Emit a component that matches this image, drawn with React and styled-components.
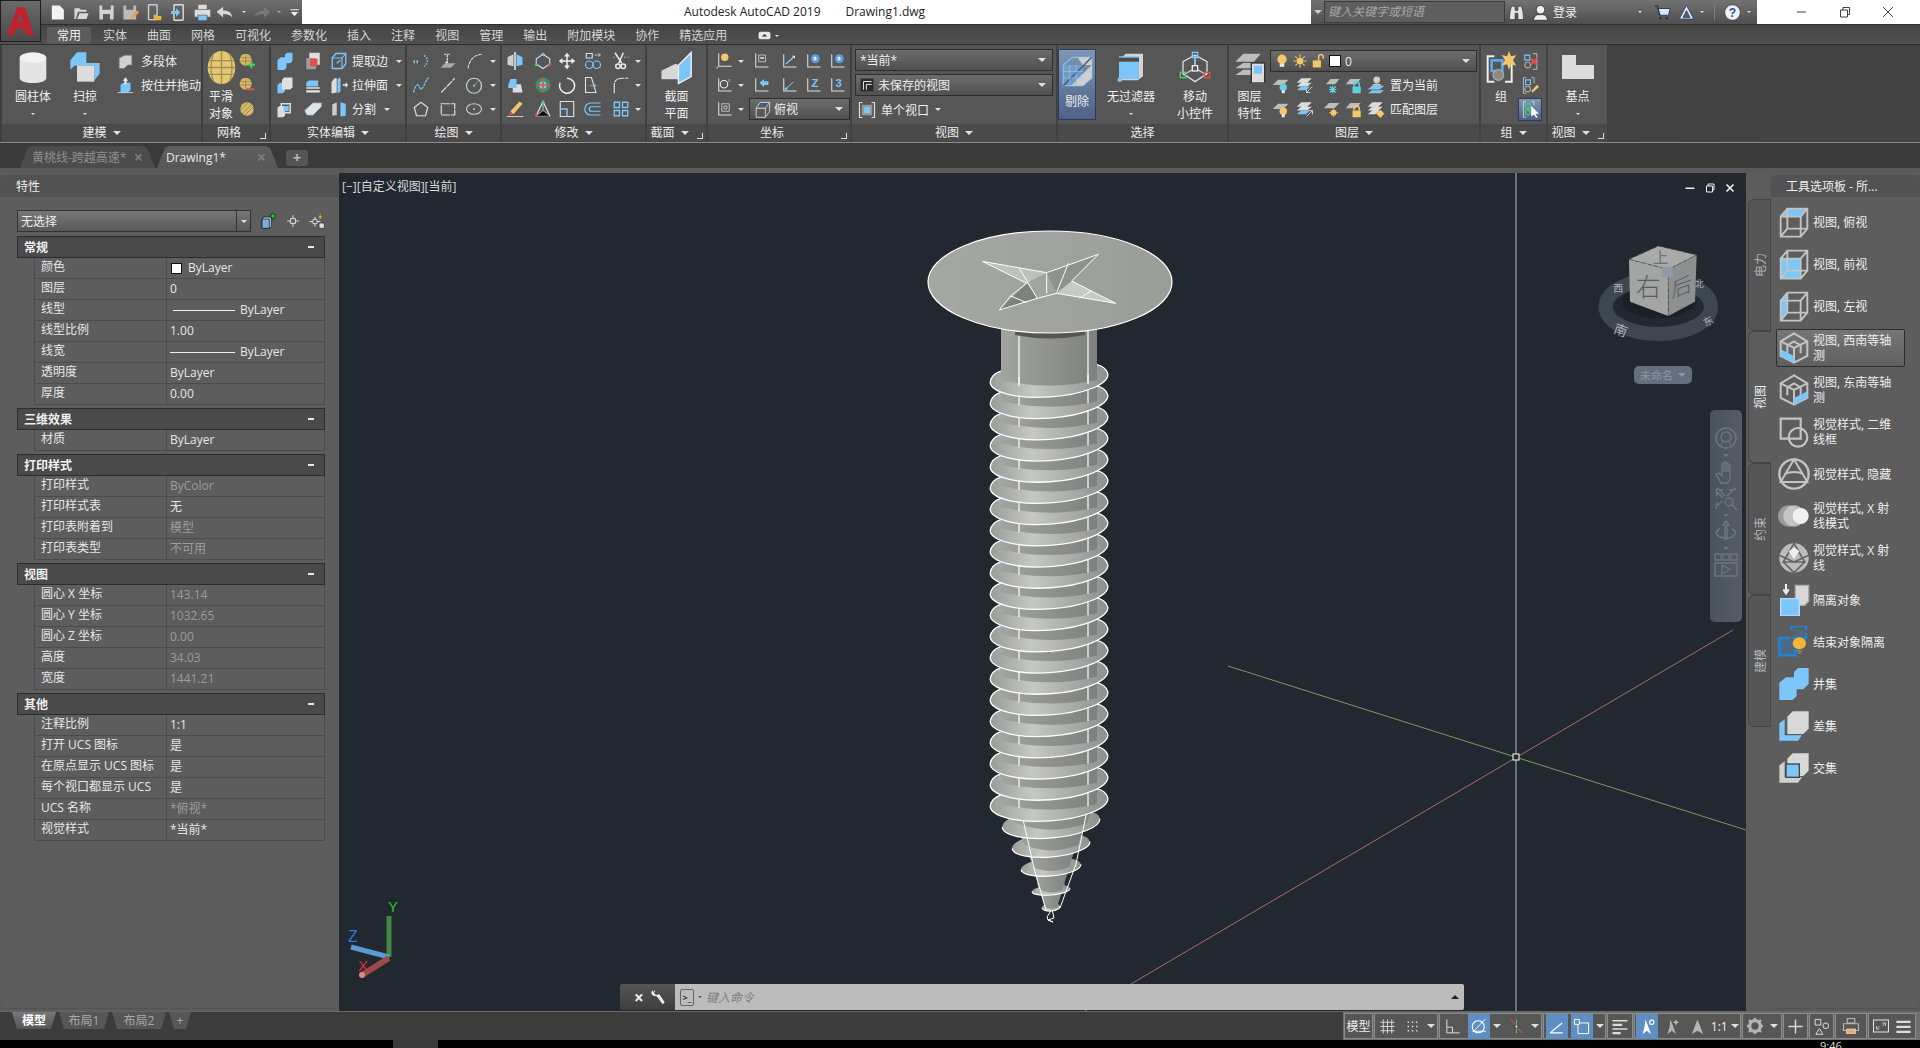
import { Fragment } from 'react';
import styled, { createGlobalStyle } from 'styled-components';

const FONT = '"Open Sans", "Noto Sans CJK SC", sans-serif';
const B = '#7cc6fa';
const W = '#e4e4e4';
const M = '#b4b4b4';
const Y = '#f2c86a';
const R = '#e2504a';

const GlobalStyle = createGlobalStyle`
  html, body { margin: 0; padding: 0; background: #000; }
  body { font-family: ${FONT}; font-size: 12px; color: #e8e8e8; }
`;

const Page = styled.div`
  position: relative;
  width: 1920px;
  height: 1048px;
  overflow: hidden;
  display: flex;
  flex-direction: column;
`;

/* title bar */
const TitleBar = styled.div`
  height: 24px;
  flex: none;
  background: #fff;
  display: flex;
  color: #222;
`;

const AppButton = styled.div`
  position: absolute;
  left: 0;
  top: 0;
  width: 39px;
  height: 40px;
  border: 1px solid #1d1d1d;
  background: linear-gradient(#6a6a6a, #4a4a4a);
  z-index: 3;
  display: flex;
  align-items: center;
  justify-content: center;
`;

const Quick = styled.div`
  margin-left: 41px;
  width: 261px;
  box-sizing: border-box;
  padding-left: 4px;
  background: linear-gradient(#6f6f6f, #4f4f4f);
  display: flex;
  align-items: center;
`;

const QuickSlot = styled.div`
  width: ${(p) => p.$w}px;
  margin-left: ${(p) => p.$ml || 0}px;
  flex: none;
  display: flex;
  justify-content: center;
  align-items: center;
`;

const DocTitle = styled.div`
  width: 1009px;
  padding-left: 382px;
  box-sizing: border-box;
  font-size: 12px;
  line-height: 24px;
  white-space: pre;
`;

const SearchBar = styled.div`
  width: 446px;
  background: linear-gradient(#727272, #4f4f4f);
  display: flex;
  align-items: center;
  color: #eee;
`;

const SearchInput = styled.div`
  width: 176px;
  height: 20px;
  flex: none;
  border: 1px solid #3c3c3c;
  background: #5e5e5e;
  color: #a8a8a8;
  font-style: italic;
  line-height: 20px;
  padding-left: 3px;
`;

const SearchLabel = styled.span`
  white-space: nowrap;
  flex: none;
`;

const SearchSep = styled.span`
  width: 1px;
  height: 16px;
  flex: none;
  margin-left: 9px;
  background: #7c7c7c;
`;

const WindowButtons = styled.div`
  flex: 1;
  display: flex;
  align-items: center;
  padding-left: 39px;
  gap: 31px;
`;

/* ribbon tabs */
const TabRow = styled.div`
  height: 20px;
  flex: none;
  background: linear-gradient(#444, #515151);
  border-top: 1px solid #2d2d2d;
  box-sizing: border-box;
  display: flex;
  align-items: flex-end;
  padding-left: 47px;
`;

const RibbonTab = styled.div`
  padding: 0 10px;
  height: 17px;
  line-height: 18px;
  margin-right: ${(p) => (p.$active ? 2 : 0)}px;
  color: ${(p) => (p.$active ? '#f2f2f2' : '#d4d4d4')};
  background: ${(p) => (p.$active ? '#5c5c5c' : 'none')};
  border-radius: 3px 3px 0 0;
  white-space: nowrap;
`;

const TabGlyph = styled.div`
  margin-left: 21px;
  height: 17px;
  display: flex;
  align-items: center;
  gap: 4px;
`;

const Ribbon = styled.div`
  height: 99px;
  flex: none;
  box-sizing: border-box;
  border-top: 1px solid #2e2e2e;
  border-bottom: 1px solid #8b8b8b;
  padding-left: 2px;
  display: flex;
  gap: 2px;
  background: linear-gradient(90deg, #3e3e3e, #434343);
`;

const Panel = styled.div`
  position: relative;
  width: ${(p) => p.$w}px;
  flex: none;
  height: 97px;
  display: flex;
  flex-direction: column;
  background: #565656;
`;

const PanelBody = styled.div`
  height: 79px;
  flex: none;
  display: flex;
`;

const PanelTitle = styled.div`
  height: 18px;
  flex: none;
  box-sizing: border-box;
  padding-right: ${(p) => (p.$launch ? 14 : 0)}px;
  background: #4a4a4a;
  display: flex;
  align-items: center;
  justify-content: center;
  gap: 6px;
  color: #eaeaea;
  line-height: 18px;
`;

const Launcher = styled.span`
  position: absolute;
  right: 3px;
  bottom: 3px;
  width: 6px;
  height: 6px;
  border-right: 1.5px solid #ddd;
  border-bottom: 1.5px solid #ddd;
  box-sizing: border-box;
`;

const Caret = styled.span`
  display: inline-block;
  flex: none;
  width: 0;
  height: 0;
  border-left: ${(p) => p.$s || 3}px solid transparent;
  border-right: ${(p) => p.$s || 3}px solid transparent;
  ${(p) => (p.$up ? 'border-bottom' : 'border-top')}: ${(p) => p.$s || 3}px solid ${(p) => p.$c || '#e0e0e0'};
  margin-left: ${(p) => p.$ml || 0}px;
`;

const BigTool = styled.div`
  width: ${(p) => p.$w}px;
  flex: none;
  display: flex;
  flex-direction: column;
  align-items: center;
  height: 79px;
  box-sizing: border-box;
  line-height: 17px;
  white-space: nowrap;
  color: #eee;
  ${(p) => p.$active && `
    border: 1px solid #2e3d55;
    height: 71px;
    margin-top: 4px;
    background: linear-gradient(#7f96b4, #4c6286);
  `}
`;

const BigIcon = styled.div`
  height: ${(p) => p.$h || 43}px;
  flex: none;
  display: flex;
  justify-content: center;
  padding-top: 6px;
  box-sizing: border-box;
`;

const CaretLine = styled.div`
  height: 17px;
  display: flex;
  align-items: center;
  justify-content: center;
  gap: 2px;
`;

const SmallGrid = styled.div`
  display: grid;
  grid-template-columns: ${(p) => p.$cols};
  grid-auto-rows: 24px;
  padding-top: ${(p) => (p.$pt === undefined ? 4 : p.$pt)}px;
  padding-left: ${(p) => p.$pl || 0}px;
  align-items: center;
`;

const SmallTool = styled.div`
  display: flex;
  align-items: center;
  justify-content: center;
  height: 24px;
`;

const SelectedTool = styled(SmallTool)`
  width: 24px;
  height: 23px;
  justify-self: center;
  box-sizing: border-box;
  background: linear-gradient(#7f96b4, #4c6286);
  border: 1px solid #2e3d55;
`;

const TextTool = styled.div`
  display: flex;
  align-items: center;
  height: 24px;
  white-space: nowrap;
  color: #eee;
  padding-left: ${(p) => p.$pl || 0}px;
`;

const Combo = styled.div`
  height: 22px;
  width: ${(p) => (p.$w ? `${p.$w}px` : 'auto')};
  box-sizing: border-box;
  border: 1px solid #2e2e2e;
  background: linear-gradient(#6c6c6c, #505050);
  display: flex;
  align-items: center;
  padding: 0 6px 0 4px;
  gap: 4px;
  color: #eee;
  white-space: nowrap;
`;

const GridCombo = styled(Combo)`
  grid-column: 3 / 7;
  margin-left: 3px;
  gap: 3px;
`;

const ComboText = styled.span`
  flex: 1;
`;

const ViewStack = styled.div`
  width: 100%;
  padding: 4px 3px 0;
  box-sizing: border-box;
  display: flex;
  flex-direction: column;
  gap: 3px;
`;

const ViewRow = styled.div`
  height: 21px;
  display: flex;
  align-items: center;
  padding-left: 3px;
  gap: 5px;
  color: #eee;
`;

const LayerCol = styled.div`
  display: flex;
  flex-direction: column;
  padding-top: 5px;
`;

const LayerSwatch = styled.span`
  width: 12px;
  height: 12px;
  background: #fff;
  border: 1px solid #111;
  box-sizing: border-box;
`;

/* document tabs */
const DocRow = styled.div`
  height: 25px;
  flex: none;
  box-sizing: border-box;
  padding: 3px 0 0 20px;
  background: #3a3a3a;
  display: flex;
`;

const DocTab = styled.div`
  width: ${(p) => p.$w}px;
  margin-left: ${(p) => p.$ml || 0}px;
  box-sizing: border-box;
  clip-path: polygon(0 100%, 8px 8%, 12px 0, calc(100% - 12px) 0, calc(100% - 8px) 8%, 100% 100%);
  background: ${(p) => (p.$active ? 'linear-gradient(#5e5e5e, #585858)' : '#4c4c4c')};
  color: ${(p) => (p.$active ? '#e8e8e8' : '#8f8f8f')};
  display: flex;
  align-items: center;
  padding: 0 12px 0 ${(p) => p.$pl}px;
  white-space: nowrap;
  font-size: 12px;
`;

const DocClose = styled.span`
  margin-left: auto;
  color: #7c7c7c;
  font-weight: 700;
  font-size: 16px;
  line-height: 16px;
`;

const PlusTab = styled.div`
  width: 22px;
  height: 16px;
  align-self: flex-end;
  margin: 0 0 2px 8px;
  background: #555;
  border-radius: 3px;
  color: #bbb;
  font-weight: 700;
  font-size: 14px;
  line-height: 16px;
  text-align: center;
`;

const Strip = styled.div`
  height: 5px;
  flex: none;
  background: #5a5a5a;
`;

/* main area */
const Main = styled.div`
  flex: none;
  height: 838px;
  display: flex;
  background: #5c5c5c;
`;

const LeftPalette = styled.div`
  width: 339px;
  flex: none;
  display: flex;
  flex-direction: column;
  padding-top: 2px;
  box-sizing: border-box;
`;

const PaletteHead = styled.div`
  height: 22px;
  flex: none;
  background: #525252;
  border-radius: 5px 5px 0 0;
  display: flex;
  align-items: center;
  padding-left: ${(p) => p.$pl}px;
  gap: 5px;
  color: #eee;
  white-space: nowrap;
`;

const Grip = styled.span`
  width: 4px;
  height: 12px;
  flex: none;
  background-image: radial-gradient(#8a8a8a 45%, transparent 50%);
  background-size: 2px 2px;
`;

const PaletteBody = styled.div`
  flex: 1;
  margin-bottom: 2px;
  border-radius: 5px;
  border-bottom: 1px solid #525252;
  padding: 13px 14px 0 17px;
  background: #5d5d5d;
`;

const SelectRow = styled.div`
  display: flex;
  align-items: center;
  height: 22px;
  margin-bottom: 4px;
`;

const SelectBox = styled.div`
  width: 236px;
  height: 22px;
  box-sizing: border-box;
  border: 1px solid #333;
  background: linear-gradient(#777, #585858);
  display: flex;
  align-items: center;
  padding-left: 3px;
  color: #eee;
`;

const SelectArrow = styled.span`
  margin-left: auto;
  width: 13px;
  height: 20px;
  border-left: 1px solid #333;
  display: flex;
  align-items: center;
  justify-content: center;
`;

const SelectIcon = styled.span`
  width: ${(p) => p.$w}px;
  display: flex;
  justify-content: center;
  margin-left: ${(p) => p.$ml || 0}px;
`;

const Category = styled.div`
  height: 22px;
  box-sizing: border-box;
  border: 1px solid #2d2d2d;
  background: #4a4a4a;
  display: flex;
  align-items: center;
  justify-content: space-between;
  padding: 0 10px 0 6px;
  font-weight: 700;
  color: #f0f0f0;
`;

const CategoryDash = styled.span`
  width: 6px;
  height: 2px;
  background: #e8e8e8;
`;

const Rows = styled.div`
  margin: 0 0 3px 17px;
  border-left: 1px solid #4c4c4c;
  border-right: 1px solid #4c4c4c;
`;

const Row = styled.div`
  height: 21px;
  box-sizing: border-box;
  border-bottom: 1px solid #4c4c4c;
  display: grid;
  grid-template-columns: 132px 1fr;
`;

const RowName = styled.div`
  padding-left: 6px;
  line-height: 17px;
  color: #e6e6e6;
  border-right: 1px solid #4c4c4c;
  white-space: nowrap;
  overflow: hidden;
`;

const RowValue = styled.div`
  padding-left: 3px;
  line-height: 20px;
  color: ${(p) => (p.$dim ? '#9c9c9c' : '#e6e6e6')};
  display: flex;
  align-items: center;
  white-space: nowrap;
`;

const LineSample = styled.span`
  width: ${(p) => p.$w}px;
  height: 1px;
  margin: 0 5px 0 ${(p) => p.$ml}px;
  background: #eee;
`;

const ColorSwatch = styled.span`
  width: 9px;
  height: 9px;
  background: #fff;
  border: 1px solid #111;
  margin: 0 6px 0 1px;
`;

/* viewport */
const Viewport = styled.div`
  position: relative;
  width: 1407px;
  flex: none;
  background: #212830;
  overflow: hidden;
`;

const Drawing = styled.svg`
  display: block;
`;

const ViewLabel = styled.div`
  position: absolute;
  left: 3px;
  top: 4px;
  color: #d8d8d8;
`;

const ViewControls = styled.div`
  position: absolute;
  right: 10px;
  top: 9px;
  display: flex;
  align-items: center;
  gap: 8px;
`;

const NamedPill = styled.div`
  position: absolute;
  left: 1295px;
  top: 193px;
  width: 58px;
  height: 18px;
  border-radius: 5px;
  background: #666e7e;
  color: #8d94a2;
  display: flex;
  align-items: center;
  justify-content: center;
  gap: 5px;
  font-size: 11px;
`;

const NavBar = styled.div`
  position: absolute;
  left: 1371px;
  top: 237px;
  width: 32px;
  height: 212px;
  border-radius: 5px;
  background: linear-gradient(90deg, #4a535b, #545d65);
  display: flex;
  flex-direction: column;
  align-items: center;
  padding-top: 17px;
  box-sizing: border-box;
  gap: 3px;
`;

const CommandLine = styled.div`
  position: absolute;
  left: 281px;
  bottom: 1px;
  width: 844px;
  height: 26px;
  display: flex;
  border-radius: 2px;
  overflow: hidden;
`;

const CommandTools = styled.div`
  width: 55px;
  flex: none;
  box-sizing: border-box;
  background: linear-gradient(#555, #3e3e3e);
  display: flex;
  align-items: center;
  padding-left: 4px;
  gap: 6px;
  color: #eee;
  font-weight: 700;
  font-size: 17px;
`;

const CommandInput = styled.div`
  flex: 1;
  background: #bcbcbc;
  display: flex;
  align-items: center;
  padding: 0 5px;
  gap: 4px;
  color: #7d7d7d;
  font-style: italic;
`;

const PromptBox = styled.span`
  width: 14px;
  height: 17px;
  border: 1px solid #666;
  box-sizing: border-box;
  border-radius: 2px;
  font-size: 9px;
  font-style: normal;
  line-height: 15px;
  text-align: center;
  color: #333;
  font-weight: 700;
`;

const Spacer = styled.span`
  flex: 1;
`;

/* tool palette */
const RightPalette = styled.div`
  flex: 1;
  display: flex;
  padding-left: 2px;
`;

const SideTabs = styled.div`
  width: 23px;
  flex: none;
  padding-top: 26px;
  display: flex;
  flex-direction: column;
`;

const SideTab = styled.div`
  height: 132px;
  box-sizing: border-box;
  border: 1px solid #444;
  border-right: ${(p) => (p.$active ? 'none' : '1px solid #444')};
  border-radius: 6px 0 0 6px;
  background: ${(p) => (p.$active ? '#5d5d5d' : '#555')};
  color: ${(p) => (p.$active ? '#eee' : '#b4b4b4')};
  display: flex;
  align-items: center;
  justify-content: center;
`;

const SideLabel = styled.span`
  transform: rotate(-90deg);
  white-space: nowrap;
`;

const ToolColumn = styled.div`
  flex: 1;
  display: flex;
  flex-direction: column;
  padding-top: 2px;
`;

const ToolBody = styled.div`
  flex: 1;
  margin-bottom: 2px;
  border-radius: 5px;
  border-bottom: 1px solid #525252;
  background: #5d5d5d;
  padding: 6px 0 0 5px;
`;

const ToolItem = styled.div`
  width: 129px;
  height: 38px;
  margin-bottom: 4px;
  box-sizing: border-box;
  padding-left: 1px;
  border: 1px solid ${(p) => (p.$hover ? '#2e2e2e' : 'transparent')};
  border-radius: 2px;
  background: ${(p) => (p.$hover ? 'linear-gradient(#767676, #5f5f5f)' : 'none')};
  display: flex;
  align-items: center;
  gap: 3px;
  color: #eee;
  line-height: 15px;
`;

const ToolText = styled.span`
  width: 83px;
  flex: none;
  word-break: break-all;
`;

/* status bar */
const StatusBar = styled.div`
  height: 29px;
  flex: none;
  box-sizing: border-box;
  background: #3c3c3c;
  border-top: 1px solid #666;
  display: flex;
  align-items: flex-start;
  justify-content: space-between;
`;

const LayoutTabs = styled.div`
  display: flex;
  padding-left: 12px;
  gap: 3px;
`;

const LayoutTab = styled.div`
  width: ${(p) => p.$w}px;
  height: 17px;
  line-height: 17px;
  text-align: center;
  clip-path: polygon(0 0, 100% 0, calc(100% - 5px) 100%, 5px 100%);
  background: ${(p) => (p.$active ? 'linear-gradient(#777, #555)' : '#565656')};
  color: ${(p) => (p.$active ? '#fff' : '#a8a8a8')};
  font-weight: ${(p) => (p.$active ? 700 : 400)};
`;

const StatusTools = styled.div`
  width: 577px;
  height: 28px;
  box-sizing: border-box;
  background: #6f6f6f;
  padding: 1px;
  display: flex;
  gap: 1px;
`;

const StatusGroup = styled.div`
  width: ${(p) => p.$w}px;
  flex: none;
  box-sizing: border-box;
  border: 1px solid #8c8c8c;
  background: #565656;
  display: flex;
  align-items: center;
  justify-content: space-around;
  color: #eee;
  white-space: nowrap;
`;

const StatusIcon = styled.span`
  width: ${(p) => p.$w || 22}px;
  height: 25px;
  display: flex;
  align-items: center;
  justify-content: center;
  background: ${(p) => (p.$on ? '#5f8fc2' : 'none')};
`;

const BottomEdge = styled.div`
  height: 8px;
  flex: none;
  background: #000;
  display: flex;
  overflow: hidden;
  color: #ddd;
`;

const EdgeGap = styled.div`
  width: 45px;
  margin-left: 393px;
  background: #3a3a3a;
`;

const Clock = styled.div`
  margin-left: 1382px;
  line-height: 20px;
  margin-top: -4px;
  font-size: 11px;
`;

const Svg = styled.svg`
  display: block;
  flex: none;
`;

const Ico = ({ n, s = 18 }) => (
  <Svg width={s} height={s} viewBox="0 0 24 24">{ICONS[n]}</Svg>
);

const wire = (extra) => (
  <>
    {extra}
    <path d="M2 8h15v15H2zM2 8l5-6h15v15l-5 6M17 8l5-6M7 2v15h15M7 17l-5 6" fill="none" stroke="#c4c4c4" strokeWidth="1.4" />
  </>
);

const iso = (face) => (
  <>
    <g fill="none" stroke="#c4c4c4" strokeWidth="1.5">
      <path d="M12 1l10 6v11l-10 5-10-5V7zM2 7l10 5 10-5M12 12v11M7 10l5-3 5 3M7 10v6M17 10v6" />
    </g>
    <path d={face} fill={B} />
  </>
);

const ICONS = {
  logo: <path d="M9 1h6l7 22h-6l-1.5-5H8l-1.5 5H1zM9.500 13h4L11.500 6z" fill="#c3202c" />,
  newDoc: <path d="M4 2h11l6 6v14H4z" fill="#f2f2f2" />,
  open: <path d="M2 21V6h7l2 2h8v3H7L4 21zm4 0l3-8h13l-3 8z" fill="#d8d8d8" />,
  save: <path d="M2 2h20v20H2zM6 2v6h12V2M7 14h10v8H7z" fill="#d2d2d2" fillRule="evenodd" />,
  saveAs: <><path d="M2 2h18v20H2zM6 2v6h10V2" fill="#bbb" fillRule="evenodd" /><path d="M12 21l2-5 7-7 3 3-7 7z" fill="#e8a14a" /></>,
  phoneIn: <><rect x="5" y="1" width="12" height="21" rx="1" fill="none" stroke="#ccc" strokeWidth="2" /><path d="M12 15h4l1 2h6v6H12z" fill="#e8b24a" /></>,
  phoneUp: <><rect x="7" y="1" width="13" height="22" rx="1" fill="none" stroke="#ddd" strokeWidth="2" /><path d="M3 10h7V6l6 6-6 6v-4H3z" fill={B} /></>,
  print: <><path d="M6 1h12v6H6zM1 8h22v10h-4v-3H5v3H1z" fill="#ddd" /><path d="M6 16h12v7H6z" fill={B} /></>,
  undo: <path d="M10 4v5c7 0 12 2 13 10-3-4-7-5-13-5v5L1 11z" fill="#d8d8d8" />,
  redo: <path d="M14 4v5C7 9 2 11 1 19c3-4 7-5 13-5v5l9-8z" fill="#777" />,
  menu: <path d="M3 5h18v2H3zM4 11h16l-8 9z" fill="#eee" />,
  binoc: <path d="M3 10l2-7h5v6h4V3h5l2 7 1 12h-8v-9h-4v9H2z" fill="#e6e6e6" stroke="#333" />,
  user: <><circle cx="12" cy="8" r="6" fill="#eee" stroke="#222" /><path d="M2 23c1-6 4-8 7-8h6c3 0 6 2 7 8z" fill="#eee" stroke="#222" /></>,
  cart: <><path d="M1 3h4l3 12h12l2-8H7" fill="none" stroke="#16335f" strokeWidth="2" /><path d="M7 7h15l-2 8H9z" fill="#dfe7f2" /><circle cx="9" cy="20" r="2" fill="#16335f" /><circle cx="18" cy="20" r="2" fill="#16335f" /></>,
  a360: <path d="M12 2l10 19H2zM12 9l-5 10h10z" fill="#eaeef6" stroke="#1e3b72" fillRule="evenodd" />,
  help: <><circle cx="12" cy="12" r="11" fill="#eef2f8" stroke="#333" /><text x="12" y="18" fontSize="17" fontWeight="700" textAnchor="middle" fill="#1d4fa0" fontFamily="Liberation Sans">?</text></>,
  cyl: <><path d="M2 5v15c0 2.500 4.500 4 10 4s10-1.500 10-4V5z" fill={W} /><ellipse cx="12" cy="5" rx="10" ry="4" fill="#f2f2f2" /></>,
  sweep: <><path d="M1 7l5-6h7v8h10v8l-4 5V11H4l-3 3z" fill={B} /><path d="M6 11h13v12H6z" fill="#dcdcdc" /></>,
  polysolid: <path d="M3 7l8-4h10v14h-6l-5 5H3z" fill="#d0d0d0" stroke="#777" />,
  presspull: <><path d="M5 11l4-3h10v11l-4 3H5z" fill={B} /><path d="M12 1l3 4h-2v5h-2V5H9zM1 22h22" stroke="#eee" fill="#eee" /></>,
  sphere: <><ellipse cx="12" cy="12" rx="10" ry="12" fill="#e3c878" /><path d="M3 7h18M2 12h20M3 17h18M12 0v24M6 2c-2 6-2 14 0 20M18 2c2 6 2 14 0 20" stroke="#a58d4a" strokeWidth="1" fill="none" /></>,
  meshAdd: <><circle cx="10" cy="10" r="9" fill="#d8bb6a" /><path d="M2 7h16M1 12h18M10 1v18" stroke="#8b7338" fill="none" /><path d="M13 16h4v-4h3v4h4v3h-4v4h-3v-4h-4z" fill="#4ece6a" /></>,
  meshSub: <><circle cx="10" cy="10" r="9" fill="#d8bb6a" /><path d="M2 7h16M1 12h18M10 1v18" stroke="#8b7338" fill="none" /><path d="M11 17h12v3H11z" fill={R} /></>,
  meshCrease: <><circle cx="12" cy="12" r="10" fill="#d8bb6a" /><path d="M4 20L20 4M8 22L22 8M2 14L14 2" stroke="#8b7338" fill="none" /></>,
  union: <path d="M2 11l4-4h6V3l3-2h7v11l-3 3h-5v6l-3 3H2z" fill={B} />,
  subtract: <><path d="M7 1h14v16H7z" fill="#ddd" /><path d="M3 8h13v15H3z" fill="#9d9d9d" /><path d="M8 9h10v10H8z" fill={R} /></>,
  extract: <><path d="M3 8l5-6h13v14l-5 6H3z" fill="none" stroke={B} strokeWidth="1.8" /><path d="M3 8h13v14M16 8l5-6M9 15l5-4" fill="none" stroke={B} strokeWidth="1.5" /></>,
  faceBoth: <><path d="M2 12l3-3h7v11l-3 3H2z" fill={B} /><path d="M8 5l3-3h11v13l-3 3H8z" fill="#e0e0e0" /></>,
  stack: <><path d="M3 9l3-3h13v8H3z" fill={B} /><path d="M3 15h18v2H3zM3 19h18v3H3z" fill="#e4e4e4" /></>,
  extrude: <><path d="M2 8l4-5h3v19l-4 1H2z" fill="#ddd" /><path d="M10 4l4-2v19l-4 2z" fill={B} /><path d="M17 11h4V8l3 4-3 4v-3h-4z" fill="#eee" /></>,
  boxLines: <><path d="M2 10l3-2h7v13l-3 2H2z" fill="#ddd" /><path d="M7 5h12v12H7z" fill="none" stroke="#ddd" strokeWidth="2" /><path d="M10 8h7v7h-7z" fill={B} /></>,
  eraser: <path d="M1 14L12 4h11v5L12 20H4z" fill="#e4e4e4" stroke={B} />,
  split: <><path d="M3 6l6-3v17l-6 1z" fill="#ccc" /><path d="M14 3l7 2v16l-7 1z" fill={B} /></>,
  dash: <path d="M2 12h8M16 5c6 2 6 11 0 14M2 14h2M6 14h2" fill="none" stroke={B} strokeWidth="2" strokeDasharray="2 2" />,
  plane: <><path d="M2 21l6-6h14l-6 6z" fill="#aaa" /><path d="M11 15V3M7 3h8M9 15l2-4" stroke="#eee" strokeWidth="1.5" strokeDasharray="3 1" /></>,
  arcDots: <path d="M4 22C6 10 12 4 22 3" fill="none" stroke="#ddd" strokeWidth="1.4" strokeDasharray="5 1" />,
  spline: <path d="M2 22c2-9 5-12 7-9s2 7 5 3 4-9 8-14" fill="none" stroke={B} strokeWidth="1.6" strokeDasharray="4 1" />,
  line: <path d="M3 22L21 3" stroke="#ddd" strokeWidth="1.6" strokeDasharray="10 1" />,
  circle: <><circle cx="12" cy="13" r="10" fill="none" stroke="#ccc" strokeWidth="1.6" /><circle cx="12" cy="13" r="1.5" fill={B} /><path d="M12 13l6-7" stroke={B} /></>,
  polygon: <path d="M12 3l9 7-3 11H6L3 10z" fill="none" stroke="#ddd" strokeWidth="1.6" />,
  rect: <path d="M3 5h18v15H3z" fill="none" stroke="#ddd" strokeWidth="1.6" strokeDasharray="12 1" />,
  ellipse: <><ellipse cx="12" cy="12" rx="10" ry="7" fill="none" stroke="#ccc" strokeWidth="1.6" /><circle cx="12" cy="12" r="1.5" fill={B} /></>,
  mirror: <><path d="M12 0v24" stroke="#eee" strokeWidth="2" /><path d="M2 7l8-4v16l-8-2z" fill="#cfcfcf" /><path d="M14 3l8 4v10l-8 2z" fill={B} /></>,
  move3d: <><path d="M12 3L3 9v7l9 6 9-6V9z" fill="none" stroke="#ddd" strokeWidth="1.4" /><circle cx="12" cy="3" r="2" fill={B} /><circle cx="3" cy="17" r="2" fill="#4fcf70" /><circle cx="21" cy="17" r="2" fill={R} /></>,
  move: <path d="M12 1l4 5h-3v5h5V8l5 4-5 4v-3h-5v5h3l-4 5-4-5h3v-5H6v3l-5-4 5-4v3h5V6H8z" fill="#eee" />,
  copy: <><path d="M3 2h8v6H3z" fill="none" stroke="#ddd" strokeWidth="1.5" /><path d="M14 4h7M19 2l3 2-3 2" stroke="#ddd" fill="none" /><circle cx="7" cy="17" r="5" fill="none" stroke={B} strokeWidth="1.6" /><circle cx="17" cy="17" r="5" fill="none" stroke={B} strokeWidth="1.6" /></>,
  scissors: <><path d="M4 1l9 14M15 1l-6 14" stroke="#eee" strokeWidth="2" /><circle cx="8" cy="19" r="3" fill="none" stroke="#eee" strokeWidth="2" /><circle cx="15" cy="19" r="3" fill="none" stroke="#eee" strokeWidth="2" /><path d="M1 7h22" stroke={B} strokeDasharray="3 2" /></>,
  stretch: <><path d="M9 14l3-3h8l2 11H9z" fill="#ddd" /><path d="M3 12l3-8h8v12H3z" fill={B} /></>,
  orbitBall: <><circle cx="12" cy="12" r="10" fill="#3f8f5a" /><circle cx="12" cy="12" r="5" fill={B} /><path d="M2 12h20M12 2v20" stroke={R} strokeWidth="2" /></>,
  rotate: <path d="M12 3a10 10 0 1 1-9 6" fill="none" stroke="#eee" strokeWidth="2" />,
  scale: <><path d="M2 2h8l6 20H2z" fill="none" stroke="#ddd" strokeWidth="1.5" /><path d="M7 13h9M13 10l3 3-3 3" stroke={B} fill="none" /></>,
  fillet: <path d="M3 23V12C3 6 7 3 14 3h8" fill="none" stroke="#ddd" strokeWidth="1.6" strokeDasharray="14 1" />,
  pencil: <><path d="M6 15L18 2l4 3L10 19z" fill="#f2c86a" /><path d="M6 15l4 4-6 2z" fill={R} /><path d="M1 22h22" stroke="#eee" /></>,
  triMesh: <><path d="M12 2L3 21h18z" fill="none" stroke="#ddd" strokeWidth="1.6" /><path d="M12 2v12M3 21l9-7 9 7" stroke="#ddd" /><circle cx="12" cy="3" r="2" fill="#4fcf70" /><circle cx="3" cy="20" r="2" fill={R} /></>,
  scaleBox: <><path d="M3 2h18v20H3z" fill="none" stroke="#ddd" strokeWidth="1.5" /><path d="M3 12h9v10" fill="none" stroke={B} strokeWidth="2" /></>,
  offset: <path d="M22 4H9a8 8 0 0 0 0 16h13M22 9H10a3 3 0 0 0 0 6h12" fill="none" stroke={B} strokeWidth="1.6" />,
  array: <path d="M3 3h7v7H3zM14 3h7v7h-7zM3 14h7v7H3zM14 14h7v7h-7z" fill="none" stroke={B} strokeWidth="1.8" />,
  section: <><path d="M1 14l10-5 4 2v9H1z" fill="#d8d8d8" /><path d="M13 10l9-9v17l-9 5z" fill={B} stroke="#eee" /></>,
  ucsBulb: <><path d="M5 2v17h17M2 22l3-3" stroke="#ddd" fill="none" strokeWidth="1.4" /><circle cx="13" cy="7" r="5" fill={Y} /></>,
  ucsObj: <><path d="M5 2v18h17" stroke="#ddd" fill="none" strokeWidth="1.4" /><path d="M9 4h9v9H9z" fill="#555" stroke="#ddd" /><path d="M11 7h5v2h-5z" fill="#eee" /></>,
  ucsFace: <><path d="M5 3v17h17" stroke="#ddd" fill="none" strokeWidth="1.4" /><path d="M8 16L19 6" stroke={B} strokeWidth="2" /><path d="M16 5h4v4z" fill="#eee" /></>,
  ucsGlobe: <><path d="M5 3v17h17" stroke="#ddd" fill="none" strokeWidth="1.4" /><circle cx="15" cy="9" r="6" fill="#5a9ee0" /><path d="M12 7l4-1 1 4-3 2z" fill="#e8e8e8" /></>,
  ucsX: <><path d="M5 3v17h17" stroke="#ddd" fill="none" strokeWidth="1.4" /><circle cx="12" cy="11" r="5" fill="none" stroke="#eee" strokeWidth="1.5" /><text x="17" y="8" fontSize="8" fill={B} fontFamily="Liberation Sans">x</text></>,
  ucsUndo: <><path d="M5 3v17h17" stroke="#ddd" fill="none" strokeWidth="1.4" /><path d="M10 9l6-5v3h6v5h-6v3z" fill={B} /></>,
  ucsDot: <><path d="M5 3v17h17" stroke="#ddd" fill="none" strokeWidth="1.4" /><path d="M8 17l10-9" stroke="#ddd" /><circle cx="8" cy="17" r="2" fill={B} /></>,
  ucsZ: <><path d="M5 3v17h17" stroke="#ddd" fill="none" strokeWidth="1.4" /><text x="10" y="15" fontSize="15" fontWeight="700" fill={B} fontFamily="Liberation Sans">Z</text></>,
  ucs3: <><path d="M5 3v17h17" stroke="#ddd" fill="none" strokeWidth="1.4" /><text x="10" y="15" fontSize="15" fontWeight="700" fill={B} fontFamily="Liberation Sans">3</text></>,
  ucsBox: <><path d="M5 3v17h17" stroke="#ddd" fill="none" strokeWidth="1.4" /><path d="M9 5h10v10H9zM12 8h4v4h-4z" fill="none" stroke="#ddd" /></>,
  topView: <><path d="M3 10h13v13H3zM3 10l6-8h13v13l-6 8" fill="none" stroke="#ddd" strokeWidth="1.2" /><path d="M3 10l6-8h13l-6 8z" fill="#4c5e75" stroke="#ddd" /></>,
  corner: <><rect x="1" y="1" width="22" height="22" fill="#2c2c2c" /><path d="M6 20V6h14M11 20V11h9" fill="none" stroke="#eee" strokeWidth="1.6" /></>,
  viewport: <><path d="M6 2H2v20h4M18 2h4v20h-4" fill="none" stroke="#ddd" strokeWidth="1.6" /><path d="M5 5h14v14H5z" fill="#999" /><path d="M8 8h8v8H8z" fill={B} /></>,
  hide: <><path d="M1 7l7-6h15v16l-7 6H1z" fill="none" stroke={B} strokeWidth="1" /><path d="M1 7h15v16H1z" fill="#7fb3e6" fillOpacity=".45" /><path d="M7 23L23 7v10l-7 6z M12 1h11v6l-7 0z" fill="#cfcfcf" /><path d="M1 23L23 1" stroke="#3c5a7e" /><path d="M6 7v16M11 7v16M1 12h15M1 17h15" stroke={B} strokeWidth=".6" /></>,
  filter: <><path d="M4 6l4-4h13v17l-4 3H4z" fill="#d4d4d4" /><path d="M3 4h15v17H3z" fill={B} /><path d="M3 5h15v3H3z" fill="#4c4c4c" /><path d="M2 20h3v3H2z" fill={B} /></>,
  gizmo: <><path d="M12 3L3 8v9l9 6 9-6V8z" fill="none" stroke="#ddd" strokeWidth="1" /><path d="M12 3v10M12 13l-9 5M12 13l9 5" stroke="#ccc" /><path d="M12 13v-9" stroke={B} /><rect x="10" y="1" width="4" height="4" fill="none" stroke={B} /><rect x="1" y="16" width="4" height="4" fill="none" stroke="#4fcf70" /><rect x="19" y="16" width="4" height="4" fill="none" stroke={R} /><rect x="10" y="11" width="4" height="4" fill="#555" stroke="#eee" /></>,
  layerProp: <><path d="M1 8l6-6h13l-5 6zM1 13l6-4h13l-5 4zM1 18l6-4h13l-5 4z" fill="#bdbdbd" /><rect x="13" y="9" width="10" height="15" fill="#ddd" stroke="#333" /><rect x="15" y="11" width="6" height="6" fill={B} /></>,
  bulb: <><circle cx="12" cy="9" r="8" fill={Y} /><path d="M8 16h8v6H8z" fill="#e8e8e8" /></>,
  sun: <><circle cx="12" cy="12" r="6" fill={Y} /><path d="M12 1v4M12 19v4M1 12h4M19 12h4M4 4l3 3M17 17l3 3M20 4l-3 3M7 17l-3 3" stroke={Y} strokeWidth="2" /></>,
  lock: <><path d="M3 11h14v12H3z" fill={Y} /><path d="M13 11V5a4 4 0 0 1 8 0v3" fill="none" stroke={Y} strokeWidth="2.500" /></>,
  layerBulb: <><path d="M1 12L8 5h14l-7 7z" fill="#bdbdbd" /><circle cx="15" cy="15" r="5" fill="#5fd0e6" /><path d="M13 19h4v4h-4z" fill="#eee" /></>,
  layerIso: <><path d="M1 9l6-6h14l-6 6zM1 14l6-5h14l-6 5z" fill="#dcdcdc" /><path d="M1 19l6-5h12l-6 5z" fill={B} /><path d="M22 14l-8 8M14 17v5h5" stroke="#eee" fill="none" /></>,
  layerFrz: <><path d="M4 11l6-7h12l-6 7z" fill="#bdbdbd" /><path d="M13 13v10M8 18h10M9 14l8 8M17 14l-8 8" stroke="#5fd0e6" strokeWidth="1.6" /></>,
  layerLock: <><path d="M1 11l6-7h14l-6 7z" fill="#bdbdbd" /><path d="M10 14h11v9H10z" fill="#5fd0e6" /><path d="M12 14v-3a3.500 3.500 0 0 1 7 0v3" fill="none" stroke="#5fd0e6" strokeWidth="2" /></>,
  layerCur: <><circle cx="13" cy="5" r="4.500" fill="#cfcfcf" /><path d="M7 13c0-2 3-3 6-3s6 1 6 3z" fill="#cfcfcf" /><path d="M1 18l6-5h16l-6 5zM1 23l6-4h16l-6 4z" fill={B} /></>,
  layerBulbY: <><path d="M1 12L8 5h14l-7 7z" fill="#bdbdbd" /><circle cx="15" cy="15" r="5" fill={Y} /><path d="M13 19h4v4h-4z" fill="#eee" /></>,
  layerIsoUp: <><path d="M1 9l6-6h14l-6 6zM1 14l6-5h14l-6 5z" fill="#dcdcdc" /><path d="M1 19l6-5h12l-6 5z" fill={B} /><path d="M14 22l8-8M22 19v-5h-5" stroke="#eee" fill="none" /></>,
  layerSun: <><path d="M1 11L8 4h14l-7 7z" fill="#bdbdbd" /><circle cx="14" cy="17" r="4" fill={Y} /><path d="M14 11v12M8 17h12" stroke={Y} /></>,
  layerLockY: <><path d="M1 11l6-7h14l-6 7z" fill="#bdbdbd" /><path d="M10 14h11v9H10z" fill={Y} /><path d="M12 14v-3a3.500 3.500 0 0 1 7 0v3" fill="none" stroke={Y} strokeWidth="2" /></>,
  layerMatch: <><path d="M1 9l6-6h14l-6 6zM1 14l6-5h14l-6 5zM1 19l6-5h10l-6 5z" fill="#dcdcdc" /><path d="M12 18l6-5 5 5-5 6z" fill={Y} /></>,
  group: <><path d="M7 4H2v19h5M15 23h5V4" fill="none" stroke="#eee" strokeWidth="1.5" /><path d="M5 7h8v8H5z" fill="none" stroke="#5aa7e8" strokeWidth="2" /><circle cx="10" cy="18" r="4" fill="#8a8a8a" stroke="#aaa" /><path d="M18 0l1.500 4 4-1-2.500 4 2.500 4-4-1-1.500 4-1.500-4-4 1 2.500-4-2.500-4 4 1z" fill={Y} /></>,
  groupDel: <><path d="M15 1h6v22h-6" fill="none" stroke="#ddd" /><path d="M4 3h7v7H4z" fill="none" stroke={B} strokeWidth="1.6" /><circle cx="8" cy="17" r="4" fill="none" stroke="#aaa" strokeWidth="1.6" /><path d="M13 8l8 8M21 8l-8 8" stroke={R} strokeWidth="3" /></>,
  groupEdit: <><path d="M6 1H2v22h4M13 1h4v8" fill="none" stroke="#ddd" /><path d="M5 4h7v7H5z" fill="none" stroke={B} strokeWidth="1.6" /><circle cx="8" cy="17" r="4" fill="none" stroke="#aaa" strokeWidth="1.6" /><path d="M13 20L21 11l3 3-9 8z" fill={Y} /></>,
  groupSel: <><path d="M6 1H2v22h4M13 1h4v5" fill="none" stroke="#eee" /><path d="M5 4h7v6H5z" fill="none" stroke="#4fcf70" strokeWidth="1.6" /><circle cx="8" cy="16" r="3.500" fill="none" stroke="#4fcf70" strokeWidth="1.6" /><path d="M13 7v15l4-3 3 5 2-1-3-5h5z" fill="#fff" /></>,
  base: <path d="M0 3h10.500v7.500H24V21H0z" fill="#dcdcdc" />,
  plusCube: <><path d="M3 9l3-3h11v14l-3 3H3z" fill="#a7c8ea" stroke="#111" /><path d="M3 9h11v14H3z" fill="#7fa9d6" stroke="#111" /><path d="M15 3h3V0h3v3h3v3h-3v3h-3V6h-3z" fill="#30cc30" stroke="#111" /></>,
  pick: <><path d="M12 2v20M2 12h20" stroke="#eee" strokeWidth="1.5" /><rect x="8" y="8" width="8" height="8" fill="#5d5d5d" stroke="#eee" strokeWidth="1.5" /></>,
  quickSel: <><path d="M9 6v14M1 13h16" stroke="#eee" strokeWidth="1.5" /><rect x="6" y="10" width="6" height="6" fill="#5d5d5d" stroke="#eee" /><path d="M18 0l-4 7h3l-2 5 5-7h-3z" fill="#f2a03c" /><path d="M15 15h8v8h-8z" fill="#ddd" stroke="#222" /></>,
  mini: <path d="M3 11h18v3H3z" fill="#eee" />,
  pill: <><rect x="1" y="5" width="22" height="14" rx="4" fill="#e8e8e8" /><path d="M7 14h10l-5-5z" fill="#333" /></>,
  restore: <path d="M8 4h12v12h-3v4H5V8h3zM8 8h9v8" fill="none" stroke="#eee" strokeWidth="2" />,
  closeX: <path d="M5 5l14 14M19 5L5 19" stroke="#eee" strokeWidth="3.500" />,
  winMin: <path d="M2 12h18" stroke="#111" strokeWidth="1.6" />,
  winMax: <path d="M3 8h14v14H3zM8 8V3h13v14h-4" fill="none" stroke="#111" strokeWidth="1.6" />,
  winClose: <path d="M2 2l20 20M22 2L2 22" stroke="#111" strokeWidth="1.6" />,
  wheel: <><circle cx="12" cy="11" r="10" fill="none" stroke="#6d767e" strokeWidth="1.5" /><circle cx="12" cy="10" r="5" fill="none" stroke="#6d767e" strokeWidth="1.5" /><path d="M6 20l3-5M18 20l-3-5" stroke="#6d767e" /></>,
  hand: <path d="M7 23l-5-9 3-1 3 3V4h2v8V2h2v10V3h2v9V5h2v10c0 5-1 8-3 8z" fill="none" stroke="#6d767e" strokeWidth="1.4" />,
  zoom: <path d="M2 2l6 1-2 1 5 5M2 2l1 6 1-2 5 5M22 2l-6 1 2 1-5 5M2 22l1-6 1 2 4-4M18 18l5 5M19 15a4 4 0 1 1-8 0 4 4 0 0 1 8 0z" fill="none" stroke="#6d767e" strokeWidth="1.4" />,
  orbit: <path d="M12 1l3 4h-2v14h-2V5H9zM6 9c-5 2-5 6 0 8s8 2 12 0 5-6 0-8" fill="none" stroke="#6d767e" strokeWidth="1.4" />,
  recorder: <path d="M1 1h6v6H1zM9 1h6v6H9zM17 1h6v6h-6zM1 10h22v13H1zM8 12l8 4.500L8 21z" fill="none" stroke="#6d767e" strokeWidth="1.3" />,
  wrench: <path d="M7 1l-1 5 3 3 5-1 8 12-3 3-9-12-5-1-3-3 1-5 3 3 2-1z" fill="#eee" />,
  grid: <path d="M6 2v20M12 2v20M18 2v20M2 6h20M2 12h20M2 18h20" stroke="#ddd" strokeWidth="1.3" />,
  dots: <path d="M5 5h2v2H5zM11 5h2v2h-2zM17 5h2v2h-2zM5 11h2v2H5zM11 11h2v2h-2zM17 11h2v2h-2zM5 17h2v2H5zM11 17h2v2h-2zM17 17h2v2h-2z" fill="#ddd" />,
  ortho: <path d="M4 2v19h18M4 13h8v8" fill="none" stroke="#ddd" strokeWidth="1.4" />,
  polar: <><circle cx="11" cy="13" r="8" fill="none" stroke="#fff" strokeWidth="1.5" /><path d="M5 19L20 3M3 19h18" stroke="#fff" strokeWidth="1.3" /></>,
  isoDraft: <><path d="M4 2l16 20" stroke={R} strokeWidth="1.4" /><path d="M12 2v20" stroke="#4fcf70" strokeWidth="1.4" /><rect x="10" y="10" width="4" height="4" fill="#eee" stroke="#333" /></>,
  osnap: <path d="M3 21l17-14M3 21h18" fill="none" stroke="#fff" strokeWidth="1.8" />,
  snap3d: <><path d="M7 7h15v15H7z" fill="none" stroke="#fff" strokeWidth="1.4" /><path d="M2 2h7v7H2z" fill="#5f8fc2" stroke="#fff" strokeWidth="1.4" /></>,
  lweight: <path d="M2 4h20v2H2zM2 9h13v3H2zM2 15h20v2H2zM2 20h11v3H2z" fill="#ddd" />,
  annot: <><path d="M9 2l4 10 4 11-6-5-6 5 3-11z" fill="#fff" /><circle cx="18" cy="6" r="3" fill="none" stroke="#fff" strokeWidth="1.5" /></>,
  annotAuto: <><path d="M9 2l4 10 4 11-6-5-6 5 3-11z" fill={M} /><path d="M17 2l1.500 3 3 1-3 1.500L17 11l-1.500-3.500L12 6l3-1z" fill={M} /></>,
  annotVis: <path d="M12 2l4 10 4 11-8-5-8 5 4-11z" fill={M} />,
  gear: <><circle cx="12" cy="12" r="8" fill="none" stroke={M} strokeWidth="5" /><path d="M12 0v5M12 19v5M0 12h5M19 12h5M3 3l4 4M17 17l4 4M21 3l-4 4M7 17l-4 4" stroke={M} strokeWidth="3.500" /></>,
  plus: <path d="M12 2v20M2 12h20" stroke="#ddd" strokeWidth="2" />,
  shapes: <path d="M3 2h8v8H3zM22 11a4 4 0 1 1-8 0 4 4 0 0 1 8 0zM9 15l5 8H4z" fill="none" stroke="#ddd" strokeWidth="1.4" />,
  printSt: <><path d="M7 2h10v6H7zM2 9h20v9H2z" fill="none" stroke={M} strokeWidth="1.6" /><path d="M6 16h12v6H6z" fill="#f0a96a" stroke="#ddd" /></>,
  fullScreen: <><rect x="2" y="4" width="20" height="16" fill="none" stroke="#ddd" strokeWidth="1.4" /><path d="M6 16l4-4M6 16h4M6 16v-4M18 8l-4 4M18 8h-4M18 8v4" stroke="#ddd" /></>,
  hamburger: <path d="M2 4h20v3H2zM2 11h20v3H2zM2 18h20v3H2z" fill="#ddd" />,
  cubeTop: wire(<path d="M2 8l5-6h15l-5 6z" fill={B} />),
  cubeFront: wire(<path d="M2 8h15v15H2z" fill={B} />),
  cubeLeft: wire(<path d="M2 8l5-6v15l-5 6z" fill={B} />),
  cubeSW: iso('M2 13l10 5v5L2 18z'),
  cubeSE: iso('M22 13l-10 5v5l10-5z'),
  style2d: <path d="M2 2h15v15H2zM22 16a7 7 0 1 1-14 0 7 7 0 0 1 14 0z" fill="none" stroke="#c4c4c4" strokeWidth="1.6" />,
  styleHide: <><circle cx="12" cy="12" r="11" fill="none" stroke="#c4c4c4" strokeWidth="1.800" /><path d="M12 1L2 18h20zM5 12c4-2 10-2 14 0" fill="none" stroke="#c4c4c4" strokeWidth="1.500" /></>,
  styleXray: <><circle cx="8" cy="12" r="8" fill="#9a9a9a" /><circle cx="12" cy="12" r="8" fill="#d0d0d0" fillOpacity=".8" /><circle cx="17" cy="12" r="6" fill="#f0f0f0" /></>,
  styleXray2: <><circle cx="12" cy="12" r="11" fill="#bcbcbc" /><path d="M12 1l8 14H4zM4 15l8 8 8-8M1 10l11 5 11-5" fill="none" stroke="#666" strokeWidth="1.300" /><path d="M8 7l4-3 4 3-4 6z" fill="#eee" /></>,
  isolate: <><path d="M13 1h10v12l-3 3h-6v-5h-1z" fill="#d8d8d8" stroke="#aaa" /><path d="M2 11h14v13H2z" fill={B} stroke="#b8dcff" /><path d="M6 0v5M4 4l2 3 2-3" stroke="#eee" strokeWidth="1.500" fill="none" /></>,
  endIso: <><path d="M10 3V0h11v3M10 9h11V5" fill="none" stroke="#1d86d8" strokeWidth="1.800" /><path d="M12 3h7v6h-7z" fill="#4a6a86" /><path d="M9 9H1v13h12v-5" fill="#4a6a86" stroke="#1d86d8" strokeWidth="1.800" /><ellipse cx="16" cy="13" rx="5" ry="4.500" fill="#f2b63c" /><path d="M14 18h4l-1 3h-2z" fill="#7a7a7a" /></>,
  unionBig: <path d="M1 11l5-4h6V3l3-3h8v12l-4 4h-5v5l-3 3H1z" fill={B} />,
  subBig: <><path d="M7 5l4-4h12v13l-4 4H7z" fill="#d8d8d8" /><path d="M1 10l4-3v12h13l-3 4H1z" fill={B} /></>,
  interBig: <><path d="M7 5l4-4h12v13l-4 4H7z" fill="#d8d8d8" /><path d="M1 10l4-3v12h13l-3 4H1z" fill="#d0d0d0" /><rect x="6" y="9" width="10" height="10" fill={B} stroke="#444" /></>,
};

const Big = ({ icon, size = 32, w, lines, caret, active, iconH }) => (
  <BigTool $w={w} $active={active}>
    <BigIcon $h={iconH}><Ico n={icon} s={size} /></BigIcon>
    {lines.map((l) => <CaretLine key={l}>{l}</CaretLine>)}
    {caret && <CaretLine><Caret $s={2.5} /></CaretLine>}
  </BigTool>
);

const Tools = ({ names, size = 18 }) => names.map((n, i) => (
  n === '^' ? <SmallTool key={i}><Caret /></SmallTool>
    : <SmallTool key={i}><Ico n={n} s={size} /></SmallTool>
));

const Title = ({ children, caret, launch }) => (
  <PanelTitle $launch={launch}>
    {children}
    {caret && <Caret $s={4} />}
    {launch && <Launcher />}
  </PanelTitle>
);

const TABS = ['实体', '曲面', '网格', '可视化', '参数化', '插入', '注释', '视图', '管理', '输出', '附加模块', '协作', '精选应用'];

const PROPS = [
  { title: '常规', rows: [['颜色', 'ByLayer', 'swatch'], ['图层', '0'], ['线型', 'ByLayer', 'line1'], ['线型比例', '1.00'], ['线宽', 'ByLayer', 'line2'], ['透明度', 'ByLayer'], ['厚度', '0.00']] },
  { title: '三维效果', rows: [['材质', 'ByLayer']] },
  { title: '打印样式', rows: [['打印样式', 'ByColor', 'dim'], ['打印样式表', '无'], ['打印表附着到', '模型', 'dim'], ['打印表类型', '不可用', 'dim']] },
  { title: '视图', rows: [['圆心 X 坐标', '143.14', 'dim'], ['圆心 Y 坐标', '1032.65', 'dim'], ['圆心 Z 坐标', '0.00', 'dim'], ['高度', '34.03', 'dim'], ['宽度', '1441.21', 'dim']] },
  { title: '其他', rows: [['注释比例', '1:1'], ['打开 UCS 图标', '是'], ['在原点显示 UCS 图标', '是'], ['每个视口都显示 UCS', '是'], ['UCS 名称', '*俯视*', 'dim'], ['视觉样式', '*当前*']] },
];

const PALETTE = [
  ['cubeTop', '视图, 俯视'], ['cubeFront', '视图, 前视'], ['cubeLeft', '视图, 左视'],
  ['cubeSW', '视图, 西南等轴测', true], ['cubeSE', '视图, 东南等轴测'], ['style2d', '视觉样式, 二维线框'],
  ['styleHide', '视觉样式, 隐藏'], ['styleXray', '视觉样式, X 射线模式'], ['styleXray2', '视觉样式, X 射线'],
  ['isolate', '隔离对象'], ['endIso', '结束对象隔离'], ['unionBig', '并集'], ['subBig', '差集'], ['interBig', '交集'],
];

const THREADS = Array.from({ length: 21 }, (_, i) => 802 - i * 21.2);
const TAPER = [
  [1051, 907, 9, 4, 6],
  [1051, 890, 19, 5, 11],
  [1051, 867, 30, 9, 18],
  [1051, 845, 39, 12, 27],
  [1051, 823, 49, 15, 36],
];

const Screw = () => (
  <g>
    <path d="M1047 917l5-8 2 9-6 2 5 2-5-2z" fill="none" stroke="#fff" strokeWidth="1" />
    {TAPER.map(([cx, cy, rx, ry, w]) => (
      <g key={cy}>
        <g transform={`rotate(-5 ${cx} ${cy})`}>
          <ellipse cx={cx} cy={cy} rx={rx} ry={ry} fill="url(#disc)" />
          <path d={`M${cx - rx} ${cy}A${rx} ${ry} 0 0 0 ${cx + rx} ${cy}`} fill="none" stroke="#fff" strokeWidth="1.2" />
        </g>
        <path d={`M${cx - w - 8} ${cy - 24}H${cx + w + 8}L${cx + w} ${cy}Q${cx} ${cy + ry * 0.9} ${cx - w} ${cy}z`} fill="url(#shaft)" />
      </g>
    ))}
    <path d="M1020 806l14 62 12 42M1088 806l-12 58-16 44" fill="none" stroke="#fff" strokeWidth="1" />
    {THREADS.map((y) => (
      <g key={y}>
        <g transform={`rotate(-4 1049 ${y})`}>
          <ellipse cx="1049" cy={y} rx="59" ry="19" fill="url(#disc)" />
          <path d={`M990 ${y}A59 19 0 0 0 1108 ${y}M990 ${y}Q992 ${y - 8} 1001 ${y - 10}M1108 ${y}Q1106 ${y - 8} 1097 ${y - 10}`} fill="none" stroke="#fff" strokeWidth="1.300" />
        </g>
        <path d={`M1001 ${y - 24}H1097V${y + 2}Q1049 ${y + 13} 1001 ${y + 2}z`} fill="url(#shaft)" />
        <path d={`M1019 ${y - 22}V${y + 6}M1088 ${y - 22}V${y + 4}`} stroke="#fff" strokeWidth="1.200" />
      </g>
    ))}
    <path d="M1001 322H1097V372Q1049 388 1001 372z" fill="url(#shaft)" />
    <path d="M1019 330V386M1088 330V384" stroke="#fff" strokeWidth="1.200" />
    <path d="M1015 335Q1050 342 1085 335L1085 332H1015z" fill="#555" />
    <ellipse cx="1050" cy="282" rx="122" ry="51" fill="url(#head)" stroke="#fff" strokeWidth="1.200" />
    <g transform="translate(900 220) scale(.3333)">
      <path d="M247 124L440 158 380 190z" fill="#bfc1bd" />
      <path d="M440 158L380 190 412 235 470 218z" fill="#a2a4a0" />
      <path d="M440 158L595 103 515 183 470 218z" fill="#8f918e" />
      <path d="M515 183L647 250 470 220z" fill="#c8cac6" />
      <path d="M412 235L298 270 380 190z" fill="#7f817e" />
      <path d="M247 124L440 158 595 103 515 183 647 250 470 220 412 235 298 270 332 228 380 190zM440 158V220M505 130L470 218M358 145L412 235M332 228L380 248M575 212L538 235" fill="none" stroke="#fff" strokeWidth="3" strokeLinejoin="round" />
    </g>
  </g>
);

const ViewCube = () => (
  <g transform="translate(1580 170) scale(.3333)">
    <ellipse cx="235" cy="410" rx="158" ry="82" fill="none" stroke="#3e4650" strokeWidth="42" />
    <ellipse cx="235" cy="395" rx="110" ry="50" fill="#1a2027" />
    <path d="M147 268L235 228 350 255 265 298z" fill="#a9aba9" />
    <path d="M147 268L265 298 265 438 150 395z" fill="#a3a5a3" />
    <path d="M265 298L350 255 345 395 265 438z" fill="#8e908f" />
    <path d="M147 268L235 228 350 255 265 298zM265 298V438" fill="none" stroke="#3e4650" strokeWidth="2" strokeDasharray="14 5" />
    <path d="M245 290h33v32h-33z" fill="#8f9ca5" />
    <text x="205" y="378" fontSize="74" textAnchor="middle" fill="#555c62" fontFamily="Noto Sans CJK SC" fontWeight="300">右</text>
    <text x="305" y="372" fontSize="62" textAnchor="middle" fill="#555c62" fontFamily="Noto Sans CJK SC" fontWeight="300" transform="skewY(-20) translate(0 112)">后</text>
    <text x="242" y="278" fontSize="46" textAnchor="middle" fill="#6b7076" fontFamily="Noto Sans CJK SC">上</text>
    <text x="122" y="495" fontSize="40" textAnchor="middle" fill="#aeb3b7" fontFamily="Noto Sans CJK SC" transform="rotate(20 122 480)">南</text>
    <text x="115" y="366" fontSize="30" textAnchor="middle" fill="#aeb3b7" fontFamily="Noto Sans CJK SC">西</text>
    <text x="358" y="352" fontSize="26" textAnchor="middle" fill="#aeb3b7" fontFamily="Noto Sans CJK SC">北</text>
    <text x="385" y="465" fontSize="30" textAnchor="middle" fill="#aeb3b7" fontFamily="Noto Sans CJK SC" transform="rotate(-30 385 455)">东</text>
  </g>
);

const Ucs = () => (
  <g>
    <path d="M389 957V916" stroke="#40893f" strokeWidth="5" />
    <path d="M389 957L351 947" stroke="#5b9bd5" strokeWidth="5" />
    <path d="M389 958L362 975" stroke="#9c4a45" strokeWidth="6" />
    <circle cx="362" cy="975" r="3" fill="#d88a86" />
    <text x="393" y="912" fontSize="15" fill="#27c427" textAnchor="middle" fontFamily="Liberation Sans">Y</text>
    <text x="353" y="942" fontSize="16" fill="#2c78dd" textAnchor="middle" fontFamily="Liberation Sans">Z</text>
    <text x="363" y="971" fontSize="15" fill="#dd3030" textAnchor="middle" fontFamily="Liberation Sans">X</text>
  </g>
);

const Scene = () => (
  <Drawing width="1407" height="838" viewBox="339 173 1407 838">
    <defs>
      <linearGradient id="disc" x1="0" x2="1">
        <stop offset="0" stopColor="#9a9c98" />
        <stop offset=".35" stopColor="#c6c8c4" />
        <stop offset="1" stopColor="#8e908d" />
      </linearGradient>
      <linearGradient id="shaft" x1="0" x2="1">
        <stop offset="0" stopColor="#a2a4a0" />
        <stop offset="1" stopColor="#7e807d" />
      </linearGradient>
      <linearGradient id="head" x1="0" x2="1">
        <stop offset="0" stopColor="#a5a7a3" />
        <stop offset="1" stopColor="#9b9d99" />
      </linearGradient>
    </defs>
    <path d="M1228 666L1746 830" stroke="#7c9a5b" strokeWidth="1" />
    <path d="M1085 1011L1733 630" stroke="#a96f64" strokeWidth="1" />
    <path d="M1516 173V1011" stroke="#a9bccb" strokeWidth="1" />
    <rect x="1513" y="754" width="6" height="6" fill="#212830" stroke="#fff" />
    <Screw />
    <ViewCube />
    <Ucs />
  </Drawing>
);

const App = () => (
  <Page>
    <GlobalStyle />
    <AppButton><Ico n="logo" s={30} /></AppButton>
    <TitleBar>
      <Quick>
        <QuickSlot $w={24}><Ico n="newDoc" s={17} /></QuickSlot>
        <QuickSlot $w={25}><Ico n="open" s={17} /></QuickSlot>
        <QuickSlot $w={24}><Ico n="save" s={17} /></QuickSlot>
        <QuickSlot $w={24}><Ico n="saveAs" s={17} /></QuickSlot>
        <QuickSlot $w={23}><Ico n="phoneIn" s={17} /></QuickSlot>
        <QuickSlot $w={25}><Ico n="phoneUp" s={17} /></QuickSlot>
        <QuickSlot $w={24}><Ico n="print" s={17} /></QuickSlot>
        <QuickSlot $w={21}><Ico n="undo" s={17} /></QuickSlot>
        <QuickSlot $w={18}><Caret $s={2.5} /></QuickSlot>
        <QuickSlot $w={18}><Ico n="redo" s={17} /></QuickSlot>
        <QuickSlot $w={15}><Caret $s={2.5} $c="#aaa" /></QuickSlot>
        <QuickSlot $w={16}><Ico n="menu" s={11} /></QuickSlot>
      </Quick>
      <DocTitle>{'Autodesk AutoCAD 2019        Drawing1.dwg'}</DocTitle>
      <SearchBar>
        <QuickSlot $w={13}><Caret $s={4} $c="#ccc" /></QuickSlot>
        <SearchInput>键入关键字或短语</SearchInput>
        <QuickSlot $w={22}><Ico n="binoc" s={17} /></QuickSlot>
        <QuickSlot $w={26}><Ico n="user" s={17} /></QuickSlot>
        <SearchLabel>登录</SearchLabel>
        <QuickSlot $w={6} $ml={60}><Caret $s={2.5} /></QuickSlot>
        <QuickSlot $w={22} $ml={8}><Ico n="cart" s={17} /></QuickSlot>
        <QuickSlot $w={26}><Ico n="a360" s={17} /></QuickSlot>
        <QuickSlot $w={6}><Caret $s={2.5} /></QuickSlot>
        <SearchSep />
        <QuickSlot $w={22} $ml={6}><Ico n="help" s={17} /></QuickSlot>
        <QuickSlot $w={6} $ml={3}><Caret $s={2.5} /></QuickSlot>
      </SearchBar>
      <WindowButtons>
        <Ico n="winMin" s={12} />
        <Ico n="winMax" s={12} />
        <Ico n="winClose" s={12} />
      </WindowButtons>
    </TitleBar>

    <TabRow>
      <RibbonTab $active>常用</RibbonTab>
      {TABS.map((t) => <RibbonTab key={t}>{t}</RibbonTab>)}
      <TabGlyph><Ico n="pill" s={13} /><Caret $s={2.5} /></TabGlyph>
    </TabRow>

    <Ribbon>
      <Panel $w={199}>
        <PanelBody>
          <Big icon="cyl" w={62} lines={['圆柱体']} caret />
          <Big icon="sweep" w={42} lines={['扫掠']} caret />
          <SmallGrid $cols="24px auto" $pl={7}>
            <SmallTool><Ico n="polysolid" s={17} /></SmallTool><TextTool $pl={4}>多段体</TextTool>
            <SmallTool><Ico n="presspull" s={17} /></SmallTool><TextTool $pl={4}>按住并拖动</TextTool>
          </SmallGrid>
        </PanelBody>
        <Title caret>建模</Title>
      </Panel>
      <Panel $w={66}>
        <PanelBody>
          <Big icon="sphere" size={33} w={36} lines={['平滑', '对象']} />
          <SmallGrid $cols="16px"><Tools names={['meshAdd', 'meshSub', 'meshCrease']} size={16} /></SmallGrid>
        </PanelBody>
        <Title launch>网格</Title>
      </Panel>
      <Panel $w={134}>
        <PanelBody>
          <SmallGrid $cols="28px 28px 24px auto">
            <Tools names={['union', 'subtract', 'extract']} />
            <TextTool $pl={1}>提取边<Caret $ml={8} /></TextTool>
            <Tools names={['faceBoth', 'stack', 'extrude']} />
            <TextTool $pl={1}>拉伸面<Caret $ml={8} /></TextTool>
            <Tools names={['boxLines', 'eraser', 'split']} />
            <TextTool $pl={1}>分割<Caret $ml={8} /></TextTool>
          </SmallGrid>
        </PanelBody>
        <Title caret>实体编辑</Title>
      </Panel>
      <Panel $w={93}>
        <PanelBody>
          <SmallGrid $cols="28px 26px 25px 14px">
            <Tools names={['dash', 'plane', 'arcDots', '^', 'spline', 'line', 'circle', '^', 'polygon', 'rect', 'ellipse', '^']} />
          </SmallGrid>
        </PanelBody>
        <Title caret>绘图</Title>
      </Panel>
      <Panel $w={143}>
        <PanelBody>
          <SmallGrid $cols="26px 30px 18px 34px 22px 12px">
            <Tools names={['mirror', 'move3d', 'move', 'copy', 'scissors', '^', 'stretch', 'orbitBall', 'rotate', 'scale', 'fillet', '^', 'pencil', 'triMesh', 'scaleBox', 'offset', 'array', '^']} />
          </SmallGrid>
        </PanelBody>
        <Title caret>修改</Title>
      </Panel>
      <Panel $w={59}>
        <PanelBody>
          <Big icon="section" size={34} w={59} lines={['截面', '平面']} />
        </PanelBody>
        <Title caret launch>截面</Title>
      </Panel>
      <Panel $w={142}>
        <PanelBody>
          <SmallGrid $cols="24px 10px 30px 26px 22px 26px" $pl={4}>
            <Tools names={['ucsBulb', '^', 'ucsObj', 'ucsFace', 'ucsGlobe', 'ucsGlobe', 'ucsX', '^', 'ucsUndo', 'ucsDot', 'ucsZ', 'ucs3', 'ucsBox', '^']} />
            <GridCombo><Ico n="topView" s={17} /><ComboText>俯视</ComboText><Caret $s={4} /></GridCombo>
          </SmallGrid>
        </PanelBody>
        <Title launch>坐标</Title>
      </Panel>
      <Panel $w={204}>
        <PanelBody>
          <ViewStack>
            <Combo><ComboText>*当前*</ComboText><Caret $s={4} /></Combo>
            <Combo><Ico n="corner" s={14} /><ComboText>未保存的视图</ComboText><Caret $s={4} /></Combo>
            <ViewRow><Ico n="viewport" s={18} />单个视口<Caret $ml={1} /></ViewRow>
          </ViewStack>
        </PanelBody>
        <Title caret>视图</Title>
      </Panel>
      <Panel $w={169}>
        <PanelBody>
          <Big icon="hide" size={31} w={38} lines={['剔除']} active iconH={43} />
          <Big icon="filter" size={32} w={70} lines={['无过滤器']} caret />
          <Big icon="gizmo" size={32} w={58} lines={['移动', '小控件']} />
        </PanelBody>
        <Title>选择</Title>
      </Panel>
      <Panel $w={250}>
        <PanelBody>
          <Big icon="layerProp" size={32} w={41} lines={['图层', '特性']} />
          <LayerCol>
            <Combo $w={207}>
              <Ico n="bulb" s={14} /><Ico n="sun" s={14} /><Ico n="lock" s={14} />
              <LayerSwatch />
              <ComboText>0</ComboText>
              <Caret $s={4} />
            </Combo>
            <SmallGrid $cols="22px 26px 28px 16px 28px auto" $pt={1}>
              <Tools names={['layerBulb', 'layerIso', 'layerFrz', 'layerLock', 'layerCur']} />
              <TextTool>置为当前</TextTool>
              <Tools names={['layerBulbY', 'layerIsoUp', 'layerSun', 'layerLockY', 'layerMatch']} />
              <TextTool>匹配图层</TextTool>
            </SmallGrid>
          </LayerCol>
        </PanelBody>
        <Title caret>图层</Title>
      </Panel>
      <Panel $w={65}>
        <PanelBody>
          <Big icon="group" size={32} w={40} lines={['组']} />
          <SmallGrid $cols="18px">
            <SmallTool><Ico n="groupDel" s={17} /></SmallTool>
            <SmallTool><Ico n="groupEdit" s={17} /></SmallTool>
            <SelectedTool><Ico n="groupSel" s={17} /></SelectedTool>
          </SmallGrid>
        </PanelBody>
        <Title caret>组</Title>
      </Panel>
      <Panel $w={59}>
        <PanelBody>
          <Big icon="base" size={32} w={59} lines={['基点']} caret />
        </PanelBody>
        <Title caret launch>视图</Title>
      </Panel>
    </Ribbon>

    <DocRow>
      <DocTab $w={135} $pl={12}>黄桃线-跨越高速*<DocClose>×</DocClose></DocTab>
      <DocTab $w={121} $ml={2} $pl={9} $active>Drawing1*<DocClose>×</DocClose></DocTab>
      <PlusTab>+</PlusTab>
    </DocRow>
    <Strip />

    <Main>
      <LeftPalette>
        <PaletteHead $pl={7}><Grip />特性</PaletteHead>
        <PaletteBody>
          <SelectRow>
            <SelectBox>无选择<SelectArrow><Caret /></SelectArrow></SelectBox>
            <SelectIcon $w={16} $ml={9}><Ico n="plusCube" s={16} /></SelectIcon>
            <SelectIcon $w={14} $ml={10}><Ico n="pick" s={14} /></SelectIcon>
            <SelectIcon $w={16} $ml={9}><Ico n="quickSel" s={16} /></SelectIcon>
          </SelectRow>
          {PROPS.map((cat) => (
            <Fragment key={cat.title}>
              <Category>{cat.title}<CategoryDash /></Category>
              <Rows>
                {cat.rows.map(([name, value, kind]) => (
                  <Row key={name}>
                    <RowName>{name}</RowName>
                    <RowValue $dim={kind === 'dim'}>
                      {kind === 'swatch' && <ColorSwatch />}
                      {kind === 'line1' && <LineSample $w={62} $ml={3} />}
                      {kind === 'line2' && <LineSample $w={65} $ml={0} />}
                      {value}
                    </RowValue>
                  </Row>
                ))}
              </Rows>
            </Fragment>
          ))}
        </PaletteBody>
      </LeftPalette>

      <Viewport>
        <Scene />
        <ViewLabel>[−][自定义视图][当前]</ViewLabel>
        <ViewControls>
          <Ico n="mini" s={12} />
          <Ico n="restore" s={12} />
          <Ico n="closeX" s={12} />
        </ViewControls>
        <NamedPill>未命名<Caret $s={4} $c="#8d94a2" /></NamedPill>
        <NavBar>
          <Ico n="wheel" s={24} />
          <Caret $c="#6d767e" />
          <Ico n="hand" s={24} />
          <Ico n="zoom" s={24} />
          <Caret $c="#6d767e" />
          <Ico n="orbit" s={24} />
          <Caret $c="#6d767e" />
          <Ico n="recorder" s={24} />
        </NavBar>
        <CommandLine>
          <CommandTools><Grip />×<Ico n="wrench" s={16} /></CommandTools>
          <CommandInput>
            <PromptBox>{'>_'}</PromptBox>
            <Caret $s={2.5} $c="#555" />
            <span>键入命令</span>
            <Spacer />
            <Caret $s={4} $up $c="#222" />
          </CommandInput>
        </CommandLine>
      </Viewport>

      <RightPalette>
        <SideTabs>
          <SideTab><SideLabel>电力</SideLabel></SideTab>
          <SideTab $active><SideLabel>视图</SideLabel></SideTab>
          <SideTab><SideLabel>约束</SideLabel></SideTab>
          <SideTab><SideLabel>建模</SideLabel></SideTab>
        </SideTabs>
        <ToolColumn>
          <PaletteHead $pl={6}><Grip />工具选项板 - 所...</PaletteHead>
          <ToolBody>
            {PALETTE.map(([icon, label, hover]) => (
              <ToolItem key={label} $hover={hover}>
                <Ico n={icon} s={32} />
                <ToolText>{label}</ToolText>
              </ToolItem>
            ))}
          </ToolBody>
        </ToolColumn>
      </RightPalette>
    </Main>

    <StatusBar>
      <LayoutTabs>
        <LayoutTab $w={44} $active>模型</LayoutTab>
        <LayoutTab $w={50}>布局1</LayoutTab>
        <LayoutTab $w={54}>布局2</LayoutTab>
        <LayoutTab $w={22}>+</LayoutTab>
      </LayoutTabs>
      <StatusTools>
        <StatusGroup $w={29}>模型</StatusGroup>
        <StatusGroup $w={64}><StatusIcon><Ico n="grid" s={17} /></StatusIcon><StatusIcon><Ico n="dots" s={17} /></StatusIcon><Caret $s={4} /></StatusGroup>
        <StatusGroup $w={103}><StatusIcon><Ico n="ortho" s={17} /></StatusIcon><StatusIcon $on><Ico n="polar" s={18} /></StatusIcon><Caret $s={4} /><StatusIcon><Ico n="isoDraft" s={17} /></StatusIcon><Caret $s={4} /></StatusGroup>
        <StatusGroup $w={63}><StatusIcon $on><Ico n="osnap" s={17} /></StatusIcon><StatusIcon $on><Ico n="snap3d" s={17} /></StatusIcon><Caret $s={4} /></StatusGroup>
        <StatusGroup $w={26}><Ico n="lweight" s={18} /></StatusGroup>
        <StatusGroup $w={107}><StatusIcon $on><Ico n="annot" s={17} /></StatusIcon><StatusIcon><Ico n="annotAuto" s={17} /></StatusIcon><StatusIcon><Ico n="annotVis" s={17} /></StatusIcon>1:1<Caret $s={4} /></StatusGroup>
        <StatusGroup $w={40}><Ico n="gear" s={16} /><Caret $s={4} /></StatusGroup>
        <StatusGroup $w={25}><Ico n="plus" s={17} /></StatusGroup>
        <StatusGroup $w={25}><Ico n="shapes" s={17} /></StatusGroup>
        <StatusGroup $w={32}><Ico n="printSt" s={18} /></StatusGroup>
        <StatusGroup $w={48}><Ico n="fullScreen" s={18} /><Ico n="hamburger" s={17} /></StatusGroup>
      </StatusTools>
    </StatusBar>
    <BottomEdge>
      <EdgeGap />
      <Clock>9:46</Clock>
    </BottomEdge>
  </Page>
);

export default App;
